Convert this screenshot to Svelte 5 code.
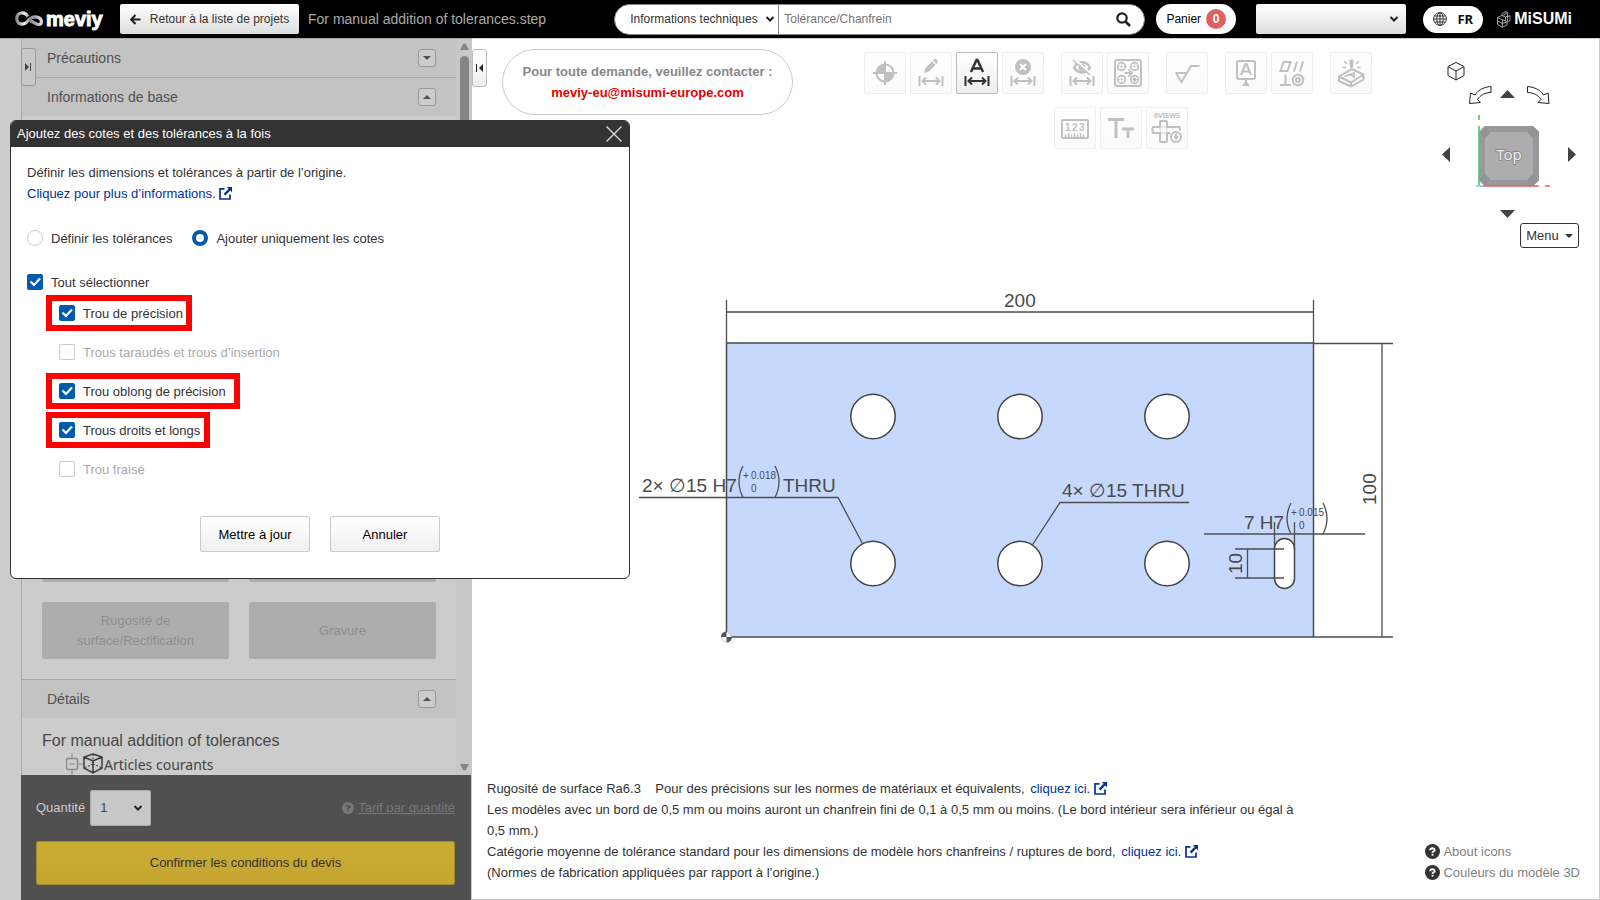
<script>
  let mode = $state('dims');
  let all = $state(true);
  let holes = $state([
    { label: 'Trou de précision', checked: true, disabled: false, mark: 146 },
    { label: 'Trous taraudés et trous d’insertion', checked: false, disabled: true, mark: 0 },
    { label: 'Trou oblong de précision', checked: true, disabled: false, mark: 194 },
    { label: 'Trous droits et longs', checked: true, disabled: false, mark: 164 },
    { label: 'Trou fraisé', checked: false, disabled: true, mark: 0 }
  ]);
  const toolRows = [
    [['origin', 'pencil', 'auto', 'delete'], ['hide', 'pattern'], ['rough'], ['datum', 'geo'], ['engrave']],
    [['ruler', 'text', 'views']]
  ];
  const names = {
    origin: 'Origine', pencil: 'Cote', auto: 'Cotes automatiques', delete: 'Supprimer', hide: 'Masquer',
    pattern: 'Groupe de trous', rough: 'Rugosité', datum: 'Référence', geo: 'Tolérance géométrique',
    engrave: 'Gravure', ruler: 'Mesure', text: 'Taille du texte', views: 'Six vues'
  };
  const circles = [873, 1020, 1167].flatMap((x) => [[x, 416.5], [x, 563.5]]);
</script>

{#snippet chevron()}
  <svg class="chev" width="10" height="8" viewBox="0 0 10 8"><path d="M1.5 2l3.5 3.5L8.500 2" fill="none" stroke="currentColor" stroke-width="2" /></svg>
{/snippet}

{#snippet ext()}
  <svg class="ext" width="13" height="13" viewBox="0 0 13 13"><path d="M5.500 1.800H1v10.200h10V7.500" fill="none" stroke="currentColor" stroke-width="1.700" /><path d="M7.800 0H13v5.200l-1.800-1.700-4.800 4.900-1.700-1.700 4.900-4.900z" fill="currentColor" /></svg>
{/snippet}

{#snippet question(size)}
  <svg width={size} height={size} viewBox="0 0 15 15"><circle cx="7.500" cy="7.500" r="7.500" fill="currentColor" /><path d="M5.200 6.200C5.200 3.700 9.700 3.700 9.700 6 9.700 7.400 7.500 7.200 7.500 8.800" fill="none" stroke="var(--q)" stroke-width="1.900" /><rect x="6.600" y="9.800" width="1.900" height="1.800" fill="var(--q)" /></svg>
{/snippet}

{#snippet dimension()}
  <path d="M9.500 24v10M32.500 24v10M12 29h18M16 25.500L12.500 29l3.500 3.500M26 25.500l3.500 3.500-3.500 3.500" />
{/snippet}

{#snippet section(title, open)}
  <div class="section">
    <span>{title}</span>
    <button class="fold" aria-label={title}>
      <svg width="8" height="4" viewBox="0 0 8 4"><path d={open ? 'M0 4L4 0l4 4z' : 'M0 0h8L4 4z'} fill="currentColor" /></svg>
    </button>
  </div>
{/snippet}

{#snippet tool(kind)}
  <button class="tool" class:active={kind === 'auto'} aria-label={names[kind]}>
    <svg width="40" height="40" viewBox="1 1 40 40" fill="none" stroke="currentColor" stroke-width="2">
      {#if kind === 'origin'}
        <circle cx="21" cy="21" r="8.500" /><path d="M21 9v24M9 21h24" /><path d="M21 21h8.500A8.500 8.500 0 0 0 21 12.500zM21 21h-8.500A8.500 8.500 0 0 0 21 29.500z" fill="none" stroke="none" /><path d="M21 21h8.500A8.500 8.500 0 0 1 21 29.500zM21 21h-8.500A8.500 8.500 0 0 1 21 12.500z" fill="currentColor" stroke="none" />
      {:else if kind === 'pencil'}
        {@render dimension()}
        <path d="M14 21l1.500-5L22 9.500l3.500 3.500-6.500 6.500zM23 8.500l1.500-1.500c1-.8 4 2 3 3.200L26.500 12z" fill="currentColor" stroke="none" />
      {:else if kind === 'auto'}
        {@render dimension()}
        <path d="M15 20l5.500-12h1L27 20M17 16.500h8" stroke-width="2.500" />
      {:else if kind === 'delete'}
        {@render dimension()}
        <circle cx="21" cy="15" r="8" fill="currentColor" stroke="none" /><path d="M18 12l6 6M24 12l-6 6" stroke="#fff" />
      {:else if kind === 'hide'}
        {@render dimension()}
        <path d="M13 15.500c4-7 12-7 16 0-4 6.500-12 6.500-16 0z" stroke-width="2.500" /><circle cx="21" cy="15.500" r="3.500" fill="currentColor" stroke="none" /><path d="M13.500 7.500l16 14.500" stroke="#fff" stroke-width="3" /><path d="M12 8l17 15" stroke-width="1.500" />
      {:else if kind === 'pattern'}
        <rect x="8" y="8" width="26" height="26" rx="2" />
        <g stroke-width="1.700"><circle cx="14.500" cy="14.500" r="3.800" /><circle cx="27.500" cy="14.500" r="3.800" /><circle cx="14.500" cy="27.500" r="3.800" /><circle cx="27.500" cy="27.500" r="3.800" /></g>
        <circle cx="27.500" cy="27.500" r="2" fill="currentColor" stroke="none" />
        <path d="M14.500 10v9M10 14.500h9M27.500 10v9M23 14.500h9M14.500 23v9M10 27.500h9M27.500 23v9M23 27.500h9" stroke-width="0.600" />
        <path d="M17.500 21H24M21.500 17.500L25 21l-3.500 3.500" />
      {:else if kind === 'rough'}
        <path d="M9.500 21h12M10 21l5.500 9L25 14h8.500" />
      {:else if kind === 'datum'}
        <rect x="12" y="9" width="18" height="18" rx="2" /><path d="M16 23l4.500-11h1L26 23M18 19.500h6.500M21 27v4" /><path d="M17 34l4-5 4 5z" fill="currentColor" stroke="none" />
      {:else if kind === 'geo'}
        <path d="M12.500 10h7l-3 9h-7zM26 9.500l-3 10M32 9.500l-3 10M14.500 22.500V33M9 33h11" /><circle cx="27" cy="28" r="5.300" /><circle cx="27" cy="28" r="2" />
      {:else if kind === 'engrave'}
        <path d="M9 24.500L21 17.500q1-.5 2 0L33.500 22.500v5L22 34q-1 .5-2 0L9 29zM9 24.500l11 5.500q1 .5 2 0L33.500 22.500M21 30.500V34" /><path d="M14.500 24.500l9.500-3.500v5.500M19.500 22.500l4.500 2" stroke-width="1.800" /><path d="M19.500 7.500h4V12l-1 4h-2l-1-4z" fill="currentColor" stroke="none" /><path d="M14 9l3 3M29 9l-3 3M12.500 15.500H16M27 15.500h3.500" stroke-width="1.500" />
      {:else if kind === 'ruler'}
        <rect x="8" y="13" width="26" height="18" rx="1" /><path d="M11.500 31v-3.500M14.500 31v-5M17.500 31v-3.500M20.500 31v-5M23.500 31v-3.500M26.500 31v-5M29.500 31v-3.500" stroke-width="1.500" />
        <text x="11" y="24" class="num">1</text><text x="18" y="24" class="num">2</text><text x="25" y="24" class="num">3</text>
      {:else if kind === 'text'}
        <path d="M8 12.500h16M16 12.500v18.500M22 22h12M28 22v9" stroke-width="3" />
      {:else}
        <text x="8" y="11" class="tiny">6VIEWS</text>
        <path d="M14 20v-5q0-1 1-1h5q1 0 1 1v5h12q1 0 1 1v2.500M14 20H7.500q-1 0-1 1v4q0 1 1 1H14v8q0 1 1 1h5q1 0 1-1v-8h3" />
        <path d="M14 20h7v6h-7zM27 20v3" stroke-width="0.700" /><circle cx="30" cy="30" r="5" fill="#fff" /><path d="M30 26.500v4" stroke-width="2.500" /><path d="M26.800 29.500h6.400L30 33.300z" fill="currentColor" stroke="none" />
      {/if}
    </svg>
  </button>
{/snippet}

<div class="page">
  <header>
    <a class="brand" href="#home">
      <svg width="28" height="16" viewBox="0 0 28 16"><defs><linearGradient id="metal"><stop offset="0" stop-color="#8d8790" /><stop offset="0.300" stop-color="#f2f0f2" /><stop offset="0.550" stop-color="#8c8890" /><stop offset="1" stop-color="#d8d4d8" /></linearGradient></defs><path d="M13 5.500C10 .5 2 .5 1.800 7.500 1.800 14 9 14.500 12.500 10.500 16 6 20 5 23.500 6.500c4 2 3.500 7 .5 7-3 .3-5-3-9-3.300" fill="none" stroke="url(#metal)" stroke-width="3.200" /></svg>
      <span>meviy</span>
    </a>
    <button class="back">
      <svg width="11" height="11" viewBox="0 0 11 11"><path d="M10.500 5.500H1.500M5.500 1L1.200 5.500l4.300 4.500" fill="none" stroke="#222" stroke-width="2" /></svg>
      Retour à la liste de projets
    </button>
    <span class="file">For manual addition of tolerances.step</span>
    <div class="grow"></div>
    <form class="search">
      <label class="pick category"><select aria-label="Catégorie"><option>Informations techniques</option></select>{@render chevron()}</label>
      <input type="text" aria-label="Recherche" placeholder="Tolérance/Chanfrein" />
      <button type="button" aria-label="Rechercher"><svg width="15" height="15" viewBox="0 0 15 15"><circle cx="6" cy="6" r="4.700" fill="none" stroke="#222" stroke-width="2.200" /><path d="M9.500 9.500l4.500 4.500" stroke="#222" stroke-width="2.600" /></svg></button>
    </form>
    <button class="cart">Panier <b>0</b></button>
    <label class="pick account"><select aria-label="Compte"><option></option></select>{@render chevron()}</label>
    <button class="lang">
      <svg width="14" height="14" viewBox="0 0 14 14" fill="none" stroke="#222" stroke-width="0.900"><circle cx="7" cy="7" r="6.400" /><ellipse cx="7" cy="7" rx="3.200" ry="6.400" /><path d="M7 .7v12.600M.7 7h12.600M1.500 4h11M1.500 10h11" /></svg>
      FR
    </button>
    <a class="misumi" href="#misumi">
      <svg width="14" height="17" viewBox="0 0 14 17" fill="none" stroke="#c4c4c4" stroke-width="0.800"><path d="M.5 6.500L5 4.500 8.500 6v4L5 8.500.5 6.500V13.500L5.500 16.300V9M5.500 16.300L10 14v-3l-1.500-1M5 4.500V2.500L9 .6l1.500 1V6L13 4.500v5L10 11M8.500 6l2-1M10.500 1.600L7 3.500v2M.5 10l5 2.500L10 11M10.500 6v4" /></svg>
      <span>MiSUMi</span>
    </a>
  </header>

  <div class="body">
    <aside>
      <div class="scroll">
        <div class="content">
          {@render section('Précautions', false)}
          {@render section('Informations de base', true)}
          <div class="grow"></div>
          <div class="cards">
            <button disabled aria-label="Taraudage"></button><button disabled aria-label="Tolérance"></button>
            <button disabled>Rugosité de<br />surface/Rectification</button><button disabled>Gravure</button>
          </div>
          {@render section('Détails', true)}
          <div class="tree">
            <h2>For manual addition of tolerances</h2>
            <div class="node">
              <svg width="38" height="24" viewBox="0 0 38 24" fill="none" stroke="#888"><path d="M6 1v5M6 18v6M12 12h6" /><rect x="0.500" y="6.500" width="11" height="11" rx="1.500" stroke-width="1.300" /><path d="M3 12h6" /><g stroke="#3c3c3c" stroke-width="1.500"><path d="M27 2l9 3v11l-9 5-9-5V5zM18 5l9 4 9-4M27 9v12" /><path d="M27 2v11M27 12l-9 4M27 12l9 4" stroke-dasharray="2 1.500" stroke-width="1" /></g></svg>
              <span>Articles courants</span>
            </div>
          </div>
        </div>
        <div class="bar">
          <svg width="9" height="7" viewBox="0 0 9 7"><path d="M0 7l3.500-6.500h2L9 7z" fill="#858585" /></svg>
          <i></i>
          <svg width="9" height="7" viewBox="0 0 9 7"><path d="M0 0l3.500 6.500h2L9 0z" fill="#858585" /></svg>
        </div>
        <button class="toggle inner" aria-label="Déplier"><svg width="7" height="8" viewBox="0 0 7 8"><path d="M0 0l4 4-4 4zM5 0h1v8H5z" fill="#444" /></svg></button>
      </div>
      <div class="quote">
        <div class="line">
          <label for="qty">Quantité</label>
          <span class="pick qty"><select id="qty"><option>1</option></select>{@render chevron()}</span>
          <a href="#tarif"><span class="q">{@render question(12)}</span><u>Tarif par quantité</u></a>
        </div>
        <button class="confirm">Confirmer les conditions du devis</button>
      </div>
    </aside>

    <main>
      <svg class="drawing" viewBox="472 39 1127 860">
        <rect x="726.500" y="343" width="587" height="294" fill="#c6d9fd" stroke="#4a4a4a" stroke-width="1.500" />
        <g fill="#fff" stroke="#444" stroke-width="1.500">
          {#each circles as [x, y]}<circle cx={x} cy={y} r="22.200" />{/each}
          <rect x="1274.500" y="538.500" width="20" height="50" rx="10" />
        </g>
        <g fill="none" stroke="#4d4d4d" stroke-width="1.300">
          <path d="M726.500 300v43M1313.500 300v43M726.500 312h587M1314 343.500h79M1314 637h79M1382 343v294" />
          <path d="M639 497.500h199l24.500 46M1189 502.500h-129l-28 43M1204 534h161M1274.500 522v28M1294.500 522v28M1235 549h49M1235 578h49M1247.500 549v29" />
          <path d="M743 466q-8 15.500 0 31.500M775 466q8 15.500 0 31.500M1291 503q-8 15.500 0 31M1323 503q8 15.500 0 31" />
        </g>
        <circle cx="726.500" cy="637" r="5" fill="#fff" stroke="#999" stroke-width="0.500" />
        <path d="M726.500 637v-5.500a5.500 5.500 0 0 0-5.500 5.500zM726.500 637v5.500a5.500 5.500 0 0 0 5.500-5.500z" fill="#555" />
        <g class="cad">
          <text x="1004" y="307">200</text>
          <text transform="translate(1376 505) rotate(-90)">100</text>
          <text transform="translate(1242 574) rotate(-90)">10</text>
          <text x="642" y="492">2×</text><text x="669" y="492">∅</text><text x="686" y="492">15 H7</text><text x="783" y="492">THRU</text>
          <text x="1062" y="497">4×</text><text x="1089" y="497">∅</text><text x="1106" y="497">15 THRU</text>
          <text x="1244" y="529">7 H7</text>
        </g>
        <g class="cad small">
          <text x="743" y="479">+</text><text x="751" y="479">0.018</text><text x="751" y="492">0</text>
          <text x="1291" y="516">+</text><text x="1299" y="516">0.015</text><text x="1299" y="529">0</text>
        </g>
      </svg>

      <div class="top">
        <button class="toggle" aria-label="Replier"><svg width="7" height="8" viewBox="0 0 7 8"><path d="M7 0L3 4l4 4zM0 0h1v8H0z" fill="#222" /></svg></button>
        <div class="contact">Pour toute demande, veuillez contacter :<a href="#mail">meviy-eu@misumi-europe.com</a></div>
        <div class="tools">
          {#each toolRows as row}
            <div class="toolrow">
              {#each row as group}<div class="group">{#each group as kind}{@render tool(kind)}{/each}</div>{/each}
            </div>
          {/each}
        </div>
        <div class="view">
          <svg width="139" height="162" viewBox="1440 60 139 162">
            <g fill="none" stroke="#222" stroke-width="1"><path d="M1456 62.500l8 4v9l-8 4.500-8-4.500v-9zM1448 66.500l8 4.500 8-4.500M1456 71v9" />
              <path d="M1491 86.500c-6 .5-13 3-16 8.500l-4.500-2-1 10.500 11-1-3-3c3-4.500 8-7 13.500-7zM1527.500 86.500c6 .5 13 3 16 8.500l4.500-2 1 10.500-11-1 3-3c-3-4.500-8-7-13.500-7z" /></g>
            <path d="M1500 98l7.500-8 7.500 8zM1500 210h15l-7.500 8zM1450 147v15l-8-7.500zM1568 147v15l8-7.500z" fill="#444" />
            <path d="M1485 126h48l6 6v48l-6 6h-48l-6-6v-48z" fill="#999" /><path d="M1479 132l6-6 6 6-6 6zM1539 132l-6-6-6 6 6 6zM1539 180l-6 6-6-6 6-6zM1479 180l6 6 6-6-6-6z" fill="#929292" />
            <path d="M1491 132h36l6 6v36l-6 6h-36l-6-6v-36z" fill="#adadad" />
            <path d="M1479 115v5M1479 126v59" stroke="#45c96b" stroke-width="1.600" /><path d="M1483 186h56M1545 186h5" stroke="#ef5b5b" stroke-width="1.600" /><path d="M1476 186h7" stroke="#8fb8f0" stroke-width="1.600" />
            <text class="face" x="1509" y="160" text-anchor="middle">Top</text>
          </svg>
          <button class="menu">Menu <svg width="8" height="4" viewBox="0 0 8 4"><path d="M0 0h8L4 4z" fill="#333" /></svg></button>
        </div>
      </div>

      <div class="bottom">
        <p>
          Rugosité de surface Ra6.3 &nbsp;&nbsp; Pour des précisions sur les normes de matériaux et équivalents, <a href="#materiaux">cliquez ici. {@render ext()}</a><br />
          Les modèles avec un bord de 0,5 mm ou moins auront un chanfrein fini de 0,1 à 0,5 mm ou moins. (Le bord intérieur sera inférieur ou égal à 0,5 mm.)<br />
          Catégorie moyenne de tolérance standard pour les dimensions de modèle hors chanfreins / ruptures de bord, <a href="#tolerances">cliquez ici. {@render ext()}</a><br />
          (Normes de fabrication appliquées par rapport à l’origine.)
        </p>
        <nav>
          <a href="#icons"><span class="q">{@render question(15)}</span>About icons</a>
          <a href="#colors"><span class="q">{@render question(15)}</span>Couleurs du modèle 3D</a>
        </nav>
      </div>
    </main>
  </div>

  <section class="dialog" role="dialog" aria-labelledby="dlg-title">
    <div class="titlebar">
      <span id="dlg-title">Ajoutez des cotes et des tolérances à la fois</span>
      <button aria-label="Fermer"><svg width="16" height="16" viewBox="0 0 16 16"><path d="M.5.500l15 15M15.500.500l-15 15" stroke="#ddd" stroke-width="1.300" /></svg></button>
    </div>
    <div class="inside">
      <p>Définir les dimensions et tolérances à partir de l’origine.<br /><a href="#info">Cliquez pour plus d’informations.&nbsp;{@render ext()}</a></p>
      <div class="radios">
        <label><input type="radio" name="mode" value="tol" bind:group={mode} />Définir les tolérances</label>
        <label><input type="radio" name="mode" value="dims" bind:group={mode} />Ajouter uniquement les cotes</label>
      </div>
      <label class="all"><input type="checkbox" bind:checked={all} />Tout sélectionner</label>
      <div class="holes">
        {#each holes as h}
          <label class:off={h.disabled}>
            <input type="checkbox" bind:checked={h.checked} disabled={h.disabled} />{h.label}
            {#if h.mark}<span class="mark" style="width: {h.mark}px"></span>{/if}
          </label>
        {/each}
      </div>
      <div class="actions"><button>Mettre à jour</button><button>Annuler</button></div>
    </div>
  </section>
</div>

<style>
  :global(body) { margin: 0; }
  .page, .page * { box-sizing: border-box; }
  .page { position: relative; min-height: 100vh; display: flex; flex-direction: column; font: 13px/20px "Liberation Sans", Arial, sans-serif; color: #333; overflow: hidden; }
  button, input, select { font: inherit; color: inherit; margin: 0; padding: 0; border: 0; background: none; }
  button { cursor: pointer; }
  a { color: #039; text-decoration: none; }
  svg { flex: none; }
  .grow { flex: 1; }

  header { height: 38px; background: #000; display: flex; align-items: center; padding: 0 28px 0 15px; font-size: 12px; }
  .brand { display: flex; align-items: center; gap: 3px; width: 105px; color: #fff; font-weight: bold; font-size: 20px; -webkit-text-stroke: 1px #fff; }
  .back { height: 30px; width: 179px; display: flex; align-items: center; justify-content: center; gap: 9px; border-radius: 2px; background: linear-gradient(#fff, #ddd); white-space: nowrap; }
  .file { margin-left: 9px; font-size: 14px; color: #aaa; }
  .search { width: 531px; height: 31px; display: flex; background: #fff; border: 1px solid #888; border-radius: 16px; overflow: hidden; }
  .search input { flex: 1; padding-left: 5px; outline: none; }
  .search input::placeholder { color: #757575; }
  .search button { width: 42px; display: grid; place-items: center; }
  .pick { position: relative; display: flex; align-items: center; }
  .pick select { appearance: none; width: 100%; height: 100%; outline: none; }
  .chev { position: absolute; right: 7px; pointer-events: none; color: #222; }
  .category { width: 164px; border-right: 1px solid #888; }
  .category .chev { right: 3px; }
  .category select { padding-left: 15px; }
  .cart { width: 80px; height: 30px; margin-left: 11px; border-radius: 15px; background: #fff; color: #000; display: flex; align-items: center; justify-content: center; gap: 5px; }
  .cart b { width: 20px; height: 20px; border-radius: 50%; background: #e06060; color: #fff; }
  .account { width: 150px; height: 30px; margin-left: 20px; background: linear-gradient(#fff, #ddd); border-radius: 2px; }
  .lang { width: 60px; height: 27px; margin-left: 17px; border-radius: 14px; background: #fff; color: #111; display: flex; align-items: center; justify-content: center; gap: 10px; font: bold 13px "Noto Sans", sans-serif; }
  .misumi { margin-left: 14px; display: flex; align-items: center; gap: 3px; color: #fff; font-weight: bold; font-size: 16px; }

  .body { flex: 1; display: grid; grid-template-columns: 472px 1fr; }
  aside { background: #ccc; padding-left: 21px; border-top: 1px solid #aaa; display: flex; flex-direction: column; }
  .scroll { position: relative; flex: 1; display: flex; border-left: 1px solid #aaa; }
  .content { flex: 1; display: flex; flex-direction: column; }
  .section { height: 38px; padding: 0 20px 0 25px; display: flex; align-items: center; justify-content: space-between; background: #c3c3c3; color: #505050; font-size: 14px; }
  .section + .section, .cards + .section { height: 39px; border-top: 1px solid #aaa; }
  .fold { width: 18px; height: 18px; border: 1px solid #999; border-radius: 3px; display: grid; place-items: center; background: #ccc; }
  .cards { display: grid; grid-template-columns: 1fr 1fr; grid-auto-rows: 57px; gap: 20px; padding: 0 20px 20px; }
  .cards button { background: #adadad; color: #8e8e8e; border-radius: 2px; }
  .tree { height: 57px; padding: 13px 0 0 20px; color: #444; overflow: hidden; }
  h2 { margin: 0; font: 16px/20px "Liberation Sans", Arial, sans-serif; color: #484848; }
  .node { display: flex; align-items: center; height: 26px; padding-left: 24px; font: 14px "Noto Sans", sans-serif; }
  .bar { width: 16px; display: flex; flex-direction: column; align-items: center; gap: 6px; padding: 4px 0 4px; background: #c8c8c8; }
  .bar i { width: 9px; height: 320px; border-radius: 5px; background: #858585; margin-bottom: auto; }
  .toggle { width: 15px; height: 38px; border: 1px solid #bbb; border-radius: 3px; background: linear-gradient(#fff, #eee); display: grid; place-items: center; }
  .toggle.inner { position: absolute; left: -1px; top: 9px; border-color: #999; background: #c8c8c8; }
  .quote { background: #505050; height: 125px; padding: 15px 16px 15px 15px; display: flex; flex-direction: column; justify-content: space-between; border-right: 1px solid #ccc; }
  .line { display: flex; align-items: center; gap: 5px; color: #ccc; }
  .qty { width: 61px; height: 36px; background: #c8c8c8; border: 1px solid #aaa; border-radius: 2px; color: #444; }
  .qty select { padding-left: 9px; }
  .line a { margin-left: auto; display: flex; align-items: center; gap: 4px; color: #777; }
  .line .q { --q: #505050; }
  .q { --q: #fff; display: flex; }
  .confirm { height: 44px; border: 1px solid #a08a30; border-radius: 2px; background: linear-gradient(#cbad34, #c4a530); color: #333; }

  main { position: relative; border: 1px solid #ccc; border-left: 0; display: flex; flex-direction: column; justify-content: space-between; background: #fff; }
  .drawing { position: absolute; inset: 0; width: 100%; height: 100%; }
  .cad { fill: #4a4a4a; font-size: 19px; }
  .small { font-size: 10px; }
  .top, .bottom { position: relative; display: flex; align-items: flex-start; }
  .top { padding-right: 20px; }
  .top > .toggle { margin-top: 10px; }
  .contact { margin: 10px 0 0 15px; width: 291px; height: 66px; flex: none; border: 1px solid #ccc; border-radius: 33px; padding-top: 11px; line-height: 21px; text-align: center; font-weight: bold; color: #888; }
  .contact a { display: block; color: #e60000; }
  .tools { flex: 1; padding: 13px 0 0 3px; display: flex; flex-direction: column; gap: 13px; }
  .toolrow { display: flex; justify-content: center; gap: 17px; }
  .toolrow + .toolrow { padding-left: 6px; }
  .group { display: flex; gap: 4px; }
  .tool { width: 42px; height: 42px; border: 1px solid #eee; border-radius: 2px; background: linear-gradient(#fff, #fafafa); color: #c0c0c0; display: grid; place-items: center; }
  .tool.active { border-color: #bbb; background: linear-gradient(#fff, #eee); color: #333; }
  .num, .tiny { font-weight: bold; font-size: 10px; fill: currentColor; stroke: none; }
  .tiny { font: bold 7px "Noto Sans", sans-serif; }
  .view { display: flex; flex-direction: column; align-items: flex-end; padding-top: 21px; }
  .face { font: 15px "Noto Sans", sans-serif; fill: #eee; stroke: #888; stroke-width: 2px; paint-order: stroke; }
  .menu { width: 59px; height: 25px; margin-top: 1px; border: 1px solid #333; border-radius: 3px; background: #fff; display: flex; align-items: center; justify-content: center; gap: 6px; }
  .bottom { justify-content: space-between; align-items: flex-end; padding: 0 19px 16px 15px; line-height: 21px; }
  p { margin: 0; }
  .bottom p { width: 818px; }
  .bottom p a { margin-left: 2px; }
  .ext { vertical-align: -2px; }
  nav a { display: flex; align-items: center; gap: 3px; color: #808080; }
  nav .q { color: #333; }

  .dialog { position: absolute; left: 10px; top: 120px; width: 620px; background: #fff; border: 1px solid #333; border-radius: 6px; overflow: hidden; }
  .titlebar { height: 26px; background: #333; color: #fff; display: flex; align-items: center; justify-content: space-between; padding: 0 7px 0 6px; }
  .titlebar button { display: flex; }
  .inside { padding: 15px 16px 26px; line-height: 21px; }
  .inside label { position: relative; display: flex; align-items: center; gap: 8px; width: max-content; height: 16px; }
  .radios { display: flex; gap: 20px; margin-top: 26px; }
  .all { margin-top: 28px; }
  .holes { display: flex; flex-direction: column; gap: 23px; padding-left: 32px; margin-top: 15px; }
  .inside input { appearance: none; width: 16px; height: 16px; border: 1px solid #ccc; border-radius: 2px; background: #fff; }
  .inside input[type="radio"] { border-radius: 50%; }
  .inside input[type="radio"]:checked { border: 4px solid #005bac; }
  .inside input[type="checkbox"]:checked { border-color: #005bac; background: #005bac url("data:image/svg+xml,%3Csvg xmlns='http://www.w3.org/2000/svg' viewBox='0 0 14 14'%3E%3Cpath d='M2.500 6.500l3.500 3.500 6-6.500' fill='none' stroke='white' stroke-width='2.200'/%3E%3C/svg%3E"); }
  .off { color: #aaa; }
  .mark { position: absolute; left: -13px; top: -10px; height: 36px; border: 6px solid #f00; pointer-events: none; }
  .actions { display: flex; gap: 20px; margin-top: 39px; padding-left: 173px; }
  .actions button { width: 110px; height: 36px; border: 1px solid #ccc; border-radius: 2px; background: linear-gradient(#fff, #f0f0f0); color: #000; }
</style>
